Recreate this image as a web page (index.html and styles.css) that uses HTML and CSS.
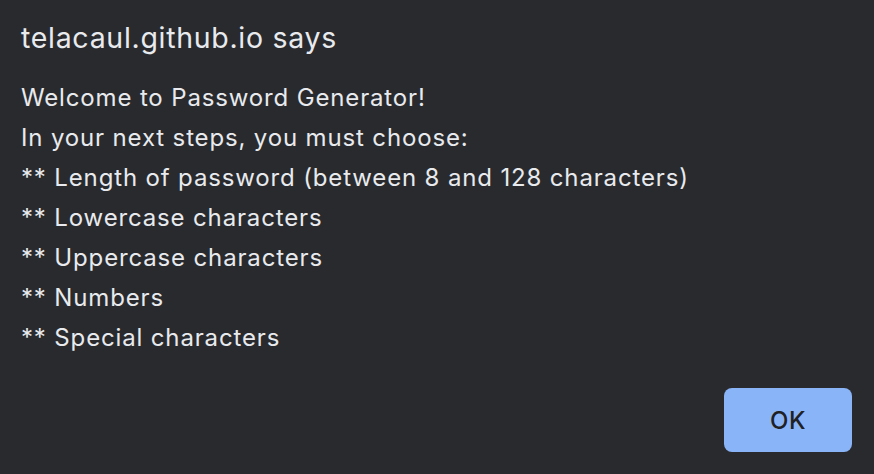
FILE: index.html
```html
<!DOCTYPE html>
<html>
<head>
<meta charset="utf-8">
<link rel="stylesheet" href="styles.css">
</head>
<body>
<div class="dialog">
  <div class="title">telacaul.github.io says</div>
  <div class="message">
    <div>Welcome to Password Generator!</div>
    <div>In your next steps, you must choose:</div>
    <div>** Length of password (between 8 and 128 characters)</div>
    <div>** Lowercase characters</div>
    <div>** Uppercase characters</div>
    <div>** Numbers</div>
    <div>** Special characters</div>
  </div>
  <div class="actions">
    <button class="ok">OK</button>
  </div>
</div>
</body>
</html>
```
FILE: styles.css
```css
html, body {
  margin: 0;
  padding: 0;
  background: #292a2d;
}
.dialog {
  width: 874px;
  height: 474px;
  box-sizing: border-box;
  padding: 20px 22px 22px 21px;
  display: flex;
  flex-direction: column;
  font-family: "Inter", "Noto Sans", sans-serif;
  color: #e8eaed;
}
.title {
  font-size: 28.5px;
  line-height: 36px;
  letter-spacing: 0.7px;
}
.message {
  margin-top: 22px;
  font-size: 24px;
  line-height: 40px;
  letter-spacing: 0.85px;
}
.actions {
  margin-top: auto;
  display: flex;
  justify-content: flex-end;
}
.ok {
  width: 128px;
  height: 64px;
  border: none;
  border-radius: 8px;
  background: #8ab4f8;
  color: #202124;
  font-family: "Inter", "Noto Sans", sans-serif;
  font-size: 24px;
  font-weight: 500;
  letter-spacing: 0.5px;
}
```
